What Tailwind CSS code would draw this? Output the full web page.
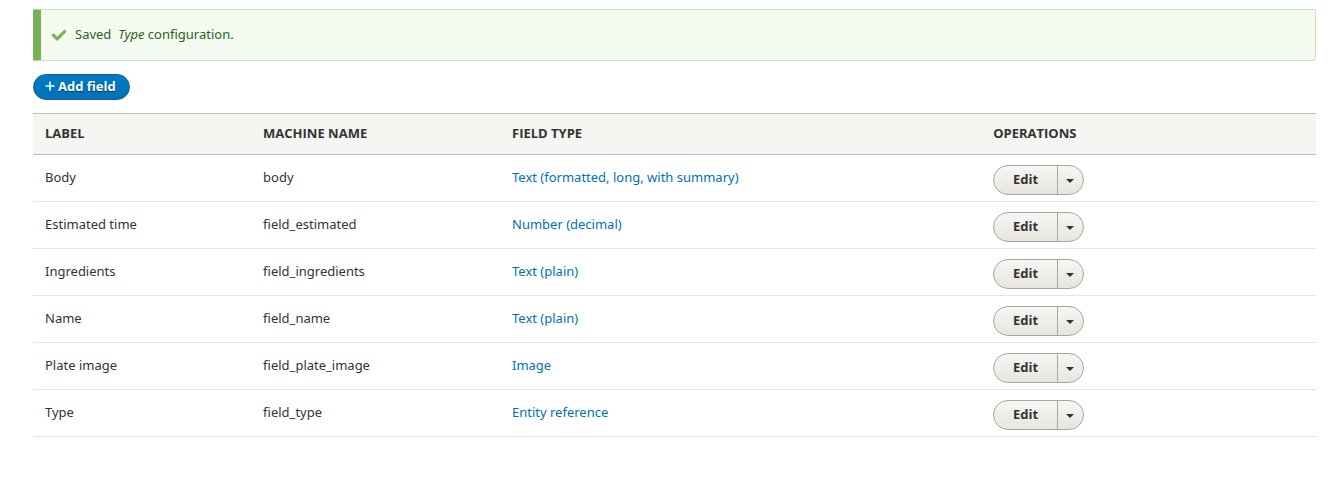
<!DOCTYPE html>
<html lang="en">
<head>
<meta charset="utf-8">
<meta name="viewport" content="width=device-width, initial-scale=1">
<title>Manage fields</title>
<script src="https://cdn.jsdelivr.net/npm/@tailwindcss/browser@4"></script>
</head>
<body class="bg-white font-['Lucida_Grande','Lucida_Sans_Unicode','Noto_Sans',sans-serif] text-[13px] leading-5 text-[#333]">
<main class="pt-[9px] pr-[18px] pl-[33px]">
  <div role="status" class="flex h-[52px] items-center rounded-xs border border-l-8 border-[#c9e1bd] border-l-[#77b259] bg-[#f3faef] pl-[10px] text-[#325e1c]">
    <svg class="mr-2 size-4 shrink-0" viewBox="0 0 16 16" fill="#73b355" aria-hidden="true"><path d="M6.464 13.676c-.194.194-.513.194-.707 0l-4.96-4.955c-.194-.193-.194-.513 0-.707l1.405-1.407c.194-.195.512-.195.707 0l2.849 2.848c.194.193.513.193.707 0l6.629-6.626c.195-.194.514-.194.707 0l1.404 1.404c.193.194.193.513 0 .707l-8.741 8.736z"/></svg>
    <p class="pb-0.5">Saved&nbsp; <em>Type</em> configuration.</p>
  </div>
  <button type="button" class="mt-[13px] flex h-[26px] items-center gap-[3px] rounded-full border border-[#1e5c90] bg-linear-to-b from-[#007bc6] to-[#0071b8] pr-[13px] pb-0.5 pl-[11px] font-['Open_Sans',sans-serif] font-bold text-white [text-shadow:0_1px_1px_#0008]">
    <svg class="size-[10px]" viewBox="0 0 10 10" fill="none" stroke="#fff" stroke-width="1.6" aria-hidden="true"><path d="M5 .5v9M.5 5h9"/></svg>
    Add field
  </button>
  <table class="mt-[13px] w-full table-fixed border-collapse text-left">
    <colgroup><col class="w-[17%]"><col class="w-[19.4%]"><col class="w-[37.5%]"><col></colgroup>
    <thead class="border-y border-[#bfbfba] bg-[#f5f5f2] font-['Open_Sans',sans-serif]">
      <tr class="h-[41px]"><th class="px-3 pb-0.5">LABEL</th><th class="px-3 pb-0.5">MACHINE NAME</th><th class="px-3 pb-0.5">FIELD TYPE</th><th class="px-3 pb-0.5">OPERATIONS</th></tr>
    </thead>
    <tbody id="fields"></tbody>
  </table>
</main>
<template id="row">
  <tr class="h-[47px] border-b border-[#e6e4df]">
    <td class="px-3 pb-0.5"></td><td class="px-3 pb-0.5"></td><td class="px-3 pb-0.5"><a href="#" class="text-[#0071b8]"></a></td>
    <td class="px-3 pt-[10px] pb-[6px]">
      <div class="flex h-[30px] w-[91px] overflow-hidden rounded-full border border-[#a6a6a6] bg-linear-to-b from-[#f6f6f3] to-[#e7e7df] font-['Open_Sans',sans-serif]">
        <button type="button" class="flex-1 border-r border-[#a6a6a6] pb-0.5 font-bold">Edit</button>
        <button type="button" class="flex w-[25px] items-center justify-center pt-0.5 pr-0.5" aria-label="List additional actions"><svg class="h-1 w-2" viewBox="0 0 8 4" fill="#333" aria-hidden="true"><path d="M0 0h8L4 4z"/></svg></button>
      </div>
    </td>
  </tr>
</template>
<script>
const fields = [
  ['Body', 'body', 'Text (formatted, long, with summary)'],
  ['Estimated time', 'field_estimated', 'Number (decimal)'],
  ['Ingredients', 'field_ingredients', 'Text (plain)'],
  ['Name', 'field_name', 'Text (plain)'],
  ['Plate image', 'field_plate_image', 'Image'],
  ['Type', 'field_type', 'Entity reference']
];
for (const [label, machine, type] of fields) {
  const row = document.getElementById('row').content.cloneNode(true);
  const cells = row.querySelectorAll('td');
  cells[0].textContent = label;
  cells[1].textContent = machine;
  row.querySelector('a').textContent = type;
  document.getElementById('fields').append(row);
}
</script>
</body>
</html>
